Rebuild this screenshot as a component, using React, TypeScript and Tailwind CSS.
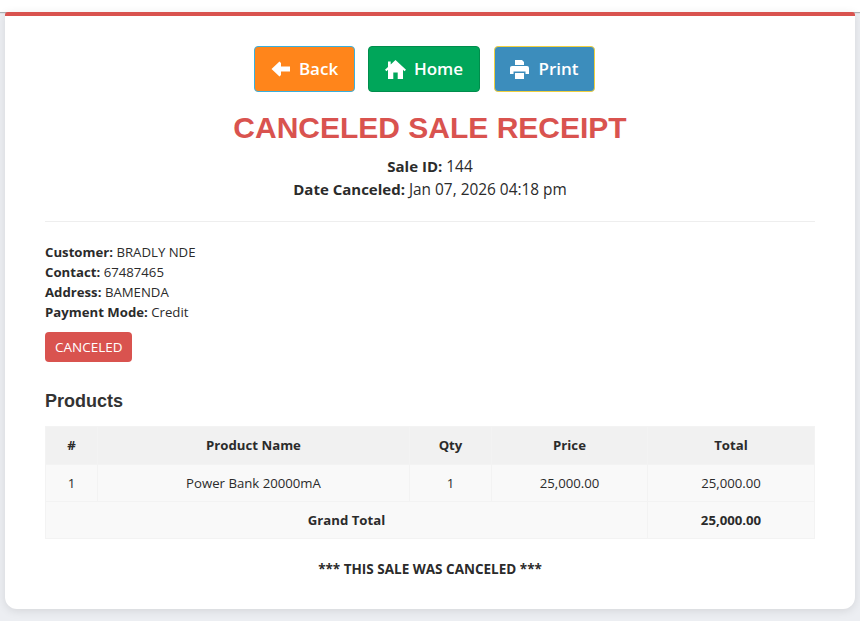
export default function App() {
  const cell = "border border-[#f3f3f3] px-2 py-2 text-center";
  const head = "border border-[#f3f3f3] px-2 pt-[7px] pb-[9px] text-center";
  const label = "text-[13.2px] font-bold";
  return (
    <div className="flex h-[621px] flex-col overflow-hidden bg-[#eceef2] font-['Open_Sans','Noto_Sans',sans-serif] text-[13.2px] text-[#2b2b2b]">
      <div className="h-3 shrink-0 bg-white shadow-[0_1px_1px_rgba(0,0,0,0.25)]" />
      <div className="mx-[5px] h-[597px] shrink-0 rounded-t-[3px] rounded-b-[12px] border-t-4 border-[#d9534f] bg-white px-10 pt-[30px] shadow-[0_2px_10px_rgba(0,0,0,0.1)]">
        <div className="flex justify-center gap-[13px] pr-[11px]">
          <button className="flex h-[46px] w-[101px] items-center justify-center gap-[9px] rounded border border-[#38b0de] bg-[#ff851b] text-[17px] font-semibold text-white">
            <svg width="19" height="16" viewBox="0 0 19 16" fill="currentColor"><path d="M8.5 0.5 L0.5 8 L8.5 15.5 L10 14 V10.5 H19 V5.5 H10 V2 Z" /></svg>
            Back
          </button>
          <button className="flex h-[46px] w-[112px] items-center justify-center gap-[8px] rounded border border-[#008d4c] bg-[#00a65a] text-[17px] font-semibold text-white">
            <svg width="21" height="19" viewBox="0 0 21 19" fill="currentColor"><path d="M10.5 0 L21 9.7 L19.5 11.2 L18 9.8 V19 H12.7 V12.5 H8.3 V19 H3 V9.8 L1.5 11.2 L0 9.7 L3 6.9 V1.5 H5.7 V4.4 Z" /></svg>
            Home
          </button>
          <button className="ml-px flex h-[46px] w-[101px] items-center justify-center gap-[9px] rounded border border-[#f0d040] bg-[#3c8dbc] text-[17px] font-semibold text-white">
            <svg width="19" height="19" viewBox="0 0 19 19" fill="currentColor"><path d="M5 0 H12 L14 2 V5 H5 Z M2 6 H17 Q19 6 19 8 V14 H15.5 V11.5 H3.5 V14 H0 V8 Q0 6 2 6 Z M5 13 H14 V19 H5 Z" /></svg>
            Print
          </button>
        </div>
        <h1 className="mt-[15px] text-center font-['Liberation_Sans',sans-serif] text-[30px] leading-[42px] font-bold text-[#d9534f]">CANCELED SALE RECEIPT</h1>
        <div className="mt-[6px] text-center text-[15.4px] leading-[23px]">
          <p><b className="text-[15px] font-bold">Sale ID:</b> 144</p>
          <p><b className="text-[15px] font-bold">Date Canceled:</b> Jan 07, 2026 04:18 pm</p>
        </div>
        <hr className="mt-[20px] border-[#eee]" />
        <div className="mt-[20px] leading-[20px]">
          <p><b className={label}>Customer:</b> BRADLY NDE</p>
          <p><b className={label}>Contact:</b> 67487465</p>
          <p><b className={label}>Address:</b> BAMENDA</p>
          <p><b className={label}>Payment Mode:</b> Credit</p>
        </div>
        <span className="mt-[10px] inline-block rounded-[4px] bg-[#d9534f] py-[6px] pr-[9px] pl-[10px] text-[13.5px] leading-[18px] text-white">CANCELED</span>
        <h2 className="mt-[26px] font-['Liberation_Sans',sans-serif] text-[18px] leading-[26px] font-bold text-[#333]">Products</h2>
        <table className="mt-[12px] w-full table-fixed border-collapse leading-[20px]">
          <colgroup>
            <col className="w-[52px]" /><col className="w-[312px]" /><col className="w-[82px]" /><col className="w-[156px]" /><col />
          </colgroup>
          <thead>
            <tr className="h-[38px] bg-[#f1f1f1] font-bold">
              <th className={head}>#</th><th className={head}>Product Name</th><th className={head}>Qty</th><th className={head}>Price</th><th className={head}>Total</th>
            </tr>
          </thead>
          <tbody>
            <tr className="bg-[#f9f9f9]">
              <td className={cell}>1</td><td className={cell}>Power Bank 20000mA</td><td className={cell}>1</td><td className={cell}>25,000.00</td><td className={cell}>25,000.00</td>
            </tr>
            <tr className="bg-[#f9f9f9] font-bold">
              <td className={cell} colSpan={4}>Grand Total</td><td className={cell}>25,000.00</td>
            </tr>
          </tbody>
        </table>
        <p className="mt-[20px] text-center text-[13.5px] leading-[20px] font-bold">*** THIS SALE WAS CANCELED ***</p>
      </div>
    </div>
  );
}
